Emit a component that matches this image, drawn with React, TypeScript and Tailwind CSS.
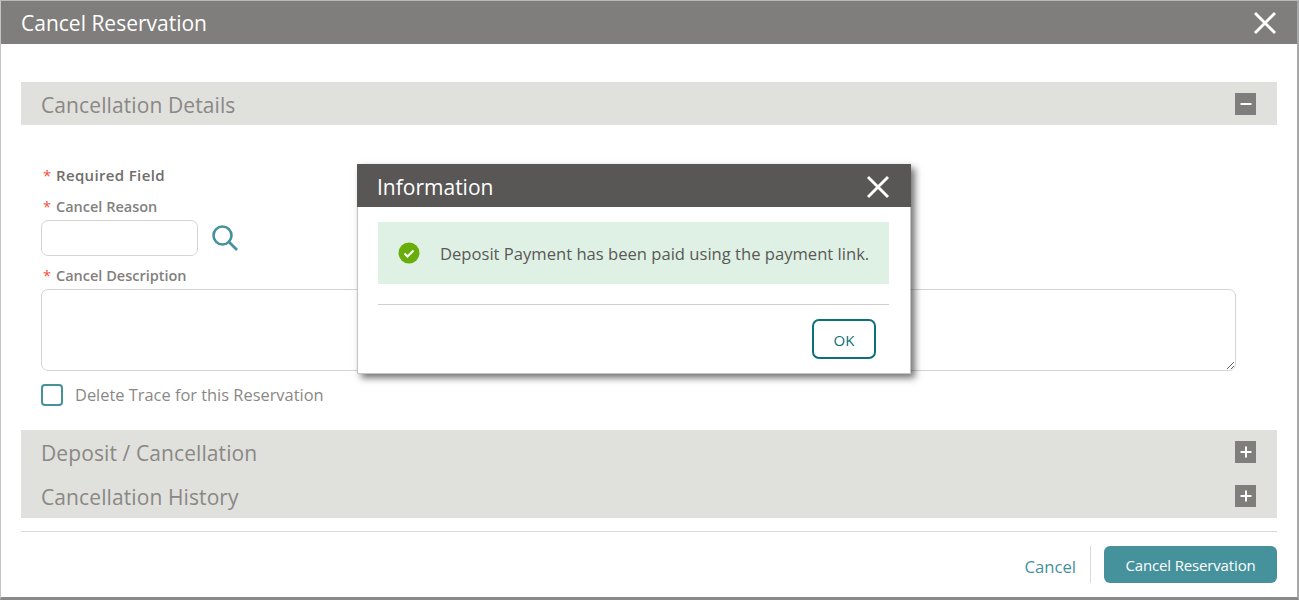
const font = 'font-["Open_Sans","Noto_Sans",sans-serif]';

const CloseIcon = ({ className }: { className: string }) => (
  <svg viewBox="0 0 24 24" fill="none" stroke="currentColor" strokeWidth={2.9} aria-hidden className={className}>
    <path d="M2 2l20 20M22 2L2 22" />
  </svg>
);

const SearchIcon = () => (
  <svg viewBox="0 0 26 26" fill="none" stroke="#45919c" strokeWidth={2.6} aria-hidden className="h-[26px] w-[26px]">
    <circle cx="10.5" cy="10.5" r="9" />
    <path d="M17 17l8 8" />
  </svg>
);

const Toggle = ({ open }: { open?: boolean }) => (
  <span className="flex h-[22px] w-[21px] items-center justify-center bg-[#7f7e7c]">
    <svg viewBox="0 0 12 12" className="h-3 w-3" stroke="#fff" strokeWidth={2} aria-hidden>
      <path d="M0.5 6h11" />
      {open ? null : <path d="M6 0.5v11" />}
    </svg>
  </span>
);

const SectionRow = ({ title, open, className }: { title: string; open?: boolean; className: string }) => (
  <div className={`flex items-center justify-between pr-[21px] pl-5 ${className}`}>
    <span className="pt-[3px] text-[21px] leading-none tracking-[0.1px] text-[#8a8885]">{title}</span>
    <Toggle open={open} />
  </div>
);

const FieldLabel = ({ children, className }: { children: string; className: string }) => (
  <div className={`flex h-[14px] items-center pl-[2px] text-[14.5px] leading-none font-semibold ${className}`}>
    <span className="w-[13px] font-normal text-[#f0513c]">*</span>
    <span>{children}</span>
  </div>
);

export default function App() {
  return (
    <div className={`${font} relative h-[600px] w-[1299px] overflow-hidden bg-white`}>
      <div className="flex h-[600px] w-full flex-col border-t border-r-2 border-b-[3px] border-l border-t-[#b9b9b9] border-r-[#a8a8a8] border-b-[#8a8a8a] border-l-[#c4c4c4]">
        <header className="flex h-[43px] shrink-0 items-center justify-between bg-[#7f7e7c] pr-5 pl-5 text-white">
          <h1 className="pt-[2px] text-[21px] leading-none">Cancel Reservation</h1>
          <CloseIcon className="h-6 w-6" />
        </header>

        <main className="flex grow flex-col pr-5 pl-5">
          <SectionRow title="Cancellation Details" open className="mt-[38px] h-[43px] bg-[#e0e0dd]" />

          <section className="flex flex-col pr-[41px] pl-5">
            <FieldLabel className="mt-[43px] text-[15px] font-bold tracking-[0.35px] text-[#6f6e6b]">Required Field</FieldLabel>
            <FieldLabel className="mt-[18px] text-[#82807d]">Cancel Reason</FieldLabel>
            <div className="mt-[6px] flex items-center gap-[14px]">
              <input
                aria-label="Cancel Reason"
                className="h-[36px] w-[157px] rounded-[7px] border border-[#d4d4d2] bg-white"
              />
              <SearchIcon />
            </div>
            <FieldLabel className="mt-[13px] text-[#82807d]">Cancel Description</FieldLabel>
            <textarea
              aria-label="Cancel Description"
              className="mt-[6px] block h-[82px] w-full rounded-[7px] border border-[#d4d4d2] bg-white"
            />
            <label className="mt-[13px] flex items-center gap-[12px]">
              <span className="h-[22px] w-[22px] rounded-[4px] border-2 border-[#45919c] bg-white" />
              <span className="text-[16.4px] leading-none text-[#8a8885]">Delete Trace for this Reservation</span>
            </label>
          </section>

          <div className="mt-[24px] h-[88px] bg-[#e0e0dd]">
            <SectionRow title="Deposit / Cancellation" className="h-[44px]" />
            <SectionRow title="Cancellation History" className="h-[44px]" />
          </div>

          <div className="mt-[13px] border-t border-[#d9d9d7]" />

          <footer className="mt-[14px] flex items-stretch justify-end">
            <a className="flex items-center pt-[5px] text-[16.7px] leading-none text-[#45919c]">Cancel</a>
            <div className="mr-[13px] ml-[14px] w-px bg-[#d9d9d7]" />
            <button className="h-[37px] w-[173px] rounded-[6px] bg-[#45919c] pt-[2px] text-[15px] leading-none tracking-[-0.15px] text-white">
              Cancel Reservation
            </button>
          </footer>
        </main>
      </div>

      <div
        role="dialog"
        className="absolute top-[164px] left-[357px] flex h-[210px] w-[554px] flex-col bg-white shadow-[4px_4px_7px_rgba(0,0,0,0.55)]"
      >
        <div className="flex h-[43px] shrink-0 items-center justify-between bg-[#585755] pr-[21px] pl-5 text-white">
          <h2 className="pt-[3px] text-[21px] leading-none">Information</h2>
          <CloseIcon className="mt-[3px] h-6 w-6" />
        </div>
        <div className="flex grow flex-col border-x border-b border-[#c4c4c4]">
          <div className="mt-[15px] mr-[21px] ml-5 flex h-[62px] items-center gap-[20px] bg-[#dff1e5] pl-5 text-[#5a5957]">
            <svg viewBox="0 0 22 22" className="h-[22px] w-[22px]" aria-hidden>
              <circle cx="11" cy="11" r="10.5" fill="#68ad0a" />
              <path d="M6.5 11.5l3 3 6-6" fill="none" stroke="#fff" strokeWidth={2} />
            </svg>
            <span className="pt-[2px] text-[16.6px] leading-none">Deposit Payment has been paid using the payment link.</span>
          </div>
          <div className="mt-5 mr-[21px] ml-5 border-t border-[#cfcfcd]" />
          <div className="mt-[14px] flex justify-end pr-[34px]">
            <button className="h-[40px] w-[64px] rounded-[7px] border-2 border-[#0e6f7c] pt-[2px] text-[15px] leading-none text-[#0e6f7c]">
              OK
            </button>
          </div>
        </div>
      </div>
    </div>
  );
}
